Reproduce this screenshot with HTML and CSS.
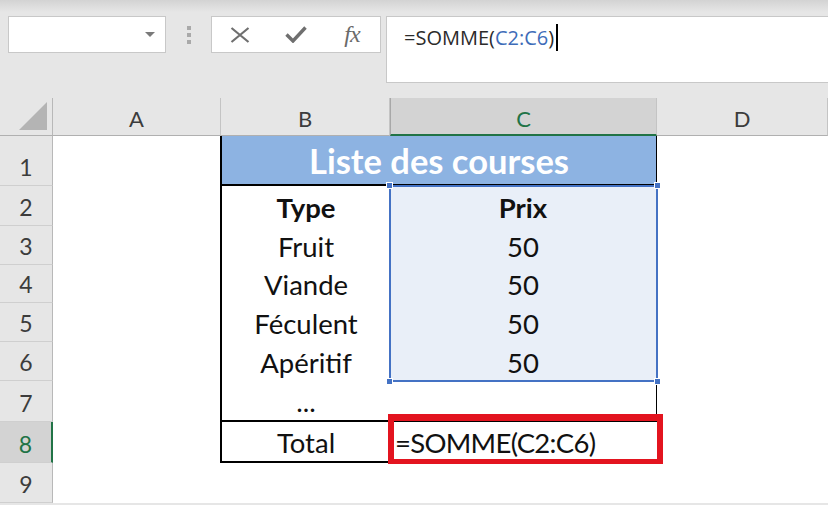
FILE: index.html
```html
<!DOCTYPE html>
<html lang="fr">
<head>
<meta charset="utf-8">
<title>Excel - SOMME</title>
<link rel="stylesheet" href="styles.css">
</head>
<body>
<div class="app">
  <div class="toolbar">
    <div class="namebox"><span class="caret"></span></div>
    <div class="grip"><i></i><i></i><i></i></div>
    <div class="fnbox">
      <span class="fnbtn">
        <svg width="20" height="16" viewBox="0 0 20 16"><path d="M1.5 1 L18.5 15 M18.5 1 L1.5 15" stroke="#6f6f6f" stroke-width="2.2" fill="none"/></svg>
      </span>
      <span class="fnbtn">
        <svg width="22" height="17" viewBox="0 0 22 17"><path d="M1.5 8.5 L8 15 L20.5 1.5" stroke="#6f6f6f" stroke-width="3.4" fill="none"/></svg>
      </span>
      <span class="fnbtn"><span class="fx">fx</span></span>
    </div>
    <div class="formula"><span>=SOMME(</span><span class="ref">C2:C6</span><span>)</span><span class="cursor"></span></div>
  </div>

  <div class="sheet-wrap">
    <div class="sheet">
      <div class="corner"><span class="tri"></span></div>
      <div class="ch">A</div>
      <div class="ch">B</div>
      <div class="ch ch-sel">C</div>
      <div class="ch">D</div>

      <div class="rh">1</div>
      <div class="cell"></div>
      <div class="title">Liste des courses</div>
      <div class="cell"></div>

      <div class="rh">2</div>
      <div class="cell"></div>
      <div class="cell colb bold">Type</div>
      <div class="cell colc sel bold">Prix</div>
      <div class="cell"></div>

      <div class="rh">3</div>
      <div class="cell"></div>
      <div class="cell colb">Fruit</div>
      <div class="cell colc sel">50</div>
      <div class="cell"></div>

      <div class="rh">4</div>
      <div class="cell"></div>
      <div class="cell colb">Viande</div>
      <div class="cell colc sel">50</div>
      <div class="cell"></div>

      <div class="rh">5</div>
      <div class="cell"></div>
      <div class="cell colb">Féculent</div>
      <div class="cell colc sel">50</div>
      <div class="cell"></div>

      <div class="rh">6</div>
      <div class="cell"></div>
      <div class="cell colb">Apéritif</div>
      <div class="cell colc sel">50</div>
      <div class="cell"></div>

      <div class="rh">7</div>
      <div class="cell"></div>
      <div class="cell colb bottom">...</div>
      <div class="cell colc bottom"></div>
      <div class="cell"></div>

      <div class="rh rh-sel">8</div>
      <div class="cell"></div>
      <div class="cell colb bottom">Total</div>
      <div class="cell formula-cell">=SOMME(C2:C6)</div>
      <div class="cell"></div>

      <div class="rh">9</div>
      <div class="cell"></div>
      <div class="cell"></div>
      <div class="cell"></div>
      <div class="cell"></div>
    </div>

    <div class="sheet overlay">
      <div class="selection">
        <span class="h h-tl"></span><span class="h h-tr"></span>
        <span class="h h-bl"></span><span class="h h-br"></span>
      </div>
      <div class="redbox"></div>
    </div>
  </div>
</div>
</body>
</html>
```

FILE: styles.css
```css
* { box-sizing: border-box; }
html, body { margin: 0; padding: 0; }
body {
  background: #e6e6e6;
  font-family: "Lato", "Liberation Sans", sans-serif;
  width: 828px;
  height: 505px;
  overflow: hidden;
}
.app { width: 828px; }

/* ---------- toolbar ---------- */
.toolbar {
  height: 98px;
  display: flex;
  align-items: flex-start;
  padding: 16px 0 0 8px;
  background: linear-gradient(#d3d3d3 0, #e6e6e6 12px, #e6e6e6 100%);
}
.namebox {
  width: 158px;
  height: 37px;
  background: #fff;
  border: 1px solid #c8c8c8;
  position: relative;
}
.caret {
  position: absolute;
  right: 10px;
  top: 15px;
  width: 0; height: 0;
  border-left: 5px solid transparent;
  border-right: 5px solid transparent;
  border-top: 5px solid #7a7a7a;
}
.grip {
  margin-left: 21px;
  margin-top: 10px;
  display: flex;
  flex-direction: column;
  gap: 3px;
}
.grip i {
  display: block;
  width: 4px;
  height: 4px;
  background: #a9a9a9;
}
.fnbox {
  margin-left: 20px;
  width: 170px;
  height: 37px;
  background: #fff;
  border: 1px solid #c8c8c8;
  display: flex;
  align-items: center;
}
.fnbtn {
  width: 56px;
  display: flex;
  justify-content: center;
  align-items: center;
}
.fx {
  font-family: "Liberation Serif", "DejaVu Serif", serif;
  font-style: italic;
  font-size: 24px;
  color: #6a6a6a;
  line-height: 1;
  margin-top: -2px;
  letter-spacing: -1px;
}
.formula {
  margin-left: 5px;
  flex: 1;
  height: 67px;
  background: #fff;
  border: 1px solid #c8c8c8;
  border-right: none;
  padding: 8px 0 0 17px;
  font-family: "Open Sans", "Lato", sans-serif;
  font-size: 20px;
  color: #2b2b2b;
  line-height: 26px;
  display: flex;
  align-items: flex-start;
}
.formula .ref { color: #3e6cb8; }
.cursor {
  display: inline-block;
  width: 1.5px;
  height: 27px;
  background: #000;
  margin-left: 2px;
  margin-top: -1px;
}

/* ---------- sheet ---------- */
.sheet-wrap { position: relative; }
.sheet {
  display: grid;
  grid-template-columns: 53px 168px 169px 267px 171px;
  grid-template-rows: 38px 50px 40px 39px 38px 39px 39px 41px 41px 40px;
  background: #fff;
}
.overlay {
  position: absolute;
  inset: 0;
  background: transparent;
  pointer-events: none;
}
.corner {
  background: #e6e6e6;
  border-right: 1px solid #b8b8b8;
  border-bottom: 1px solid #b0b0b0;
  position: relative;
}
.tri {
  position: absolute;
  right: 5px;
  bottom: 5px;
  width: 0; height: 0;
  border-left: 28px solid transparent;
  border-bottom: 28px solid #b4b4b4;
}
.ch {
  background: #e6e6e6;
  border-right: 1px solid #c4c4c4;
  border-bottom: 1px solid #b0b0b0;
  display: flex;
  justify-content: center;
  align-items: flex-end;
  padding-bottom: 3px;
  font-size: 22px;
  color: #3c3c3c;
}
.ch-sel {
  background: #d3d3d3;
  color: #217346;
  border-left: 1px solid #a8a8a8;
  border-bottom: 2px solid #217346;
  padding-bottom: 2px;
}
.rh {
  background: #e6e6e6;
  border-right: 1px solid #b8b8b8;
  border-bottom: 1px solid #cfcfcf;
  display: flex;
  justify-content: center;
  align-items: flex-end;
  padding-bottom: 4px;
  font-size: 23px;
  color: #3c3c3c;
}
.rh-sel {
  background: #d3d3d3;
  color: #217346;
  border-right: 2px solid #217346;
}
.cell {
  background: #fff;
  display: flex;
  justify-content: center;
  align-items: flex-end;
  padding-bottom: 2px;
  font-size: 27.5px;
  color: #111;
  line-height: 1.2;
}
.bold { font-weight: 700; }
.colb { border-left: 2px solid #000; margin-left: -1px; }
.colc { border-right: 2px solid #000; margin-right: -1px; }
.colb.bottom, .colc.bottom { border-bottom: 2px solid #000; }
.sel { background: #e9eff8; }
.title {
  grid-column: span 2;
  background: #8db3e2;
  border-left: 2px solid #000;
  border-right: 2px solid #000;
  border-bottom: 2px solid #000;
  margin-left: -1px;
  margin-right: -1px;
  color: #fff;
  font-weight: 700;
  font-size: 34.5px;
  display: flex;
  justify-content: center;
  align-items: center;
  padding-top: 1px;
}
.formula-cell {
  justify-content: flex-start;
  padding-left: 5px;
  letter-spacing: -0.7px;
  border-bottom: 2px solid #000;
}

/* overlays */
.selection {
  grid-column: 4;
  grid-row: 3 / 8;
  margin: -1px -1px -1px -1px;
  border: 2px solid #4472c4;
  position: relative;
}
.h {
  position: absolute;
  width: 7px;
  height: 7px;
  background: #4472c4;
  border: 1px solid #fff;
}
.h-tl { left: -5px; top: -5px; }
.h-tr { right: -5px; top: -5px; }
.h-bl { left: -5px; bottom: -5px; }
.h-br { right: -5px; bottom: -5px; }
.redbox {
  grid-column: 4;
  grid-row: 9;
  margin: -8px -6px -1px -2px;
  border: 6px solid #e3141f;
  border-top-width: 7px;
  border-bottom-width: 5px;
}
```
